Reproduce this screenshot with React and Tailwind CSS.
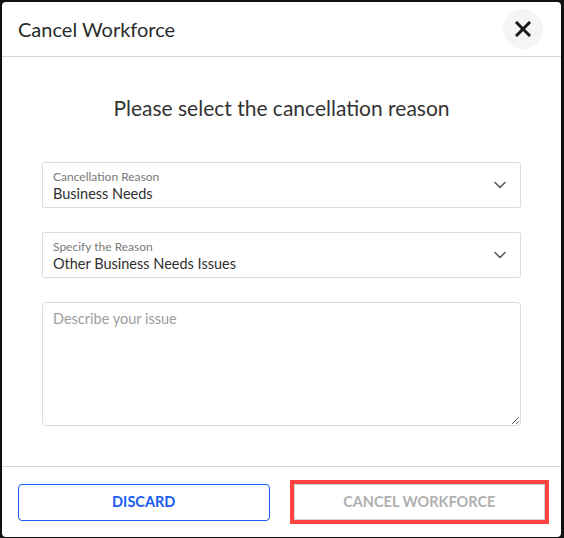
import React from 'react';
import { ChevronDown } from 'lucide-react';

const SelectBox = ({ label, value }) => (
    <div className="h-[46px] border border-[#dcdcdc] rounded-[2px] flex items-center justify-between pl-[10px] pr-[10px]">
        <div className="flex flex-col mt-[4px]">
            <span className="text-[12px] leading-[14px] text-[#7a7a7a]">{label}</span>
            <span className="text-[14.5px] leading-[20px] text-[#2f2f2f]">{value}</span>
        </div>
        <ChevronDown size={20} strokeWidth={1.8} className="text-[#555]" />
    </div>
);

const App = () => {
    return (
        <div className="w-[564px] h-[538px] bg-[#111] pt-[2px] pl-[2px] overflow-hidden" style={{ fontFamily: 'Lato, "Noto Sans", sans-serif' }}>
            <div className="w-[559px] h-[535px] bg-white rounded-[4px] flex flex-col">
                {/* Header */}
                <div className="h-[55px] border-b border-[#d6d6d6] flex items-center justify-between pl-4 pr-[18px]">
                    <h2 className="text-[20px] text-[#2b2b2b]">Cancel Workforce</h2>
                    <button className="w-10 h-10 rounded-full bg-[#f5f5f5] flex items-center justify-center">
                        <svg width="16" height="16" viewBox="0 0 16 16">
                            <path d="M2 2 L14 14 M14 2 L2 14" stroke="#1a1a1a" strokeWidth="3" strokeLinecap="square" />
                        </svg>
                    </button>
                </div>

                {/* Body */}
                <div className="flex-1 px-10 pt-[37px]">
                    <p className="text-center text-[21px] leading-[28px] text-[#333]">Please select the cancellation reason</p>
                    <div className="mt-[40px] flex flex-col gap-[24px]">
                        <SelectBox label="Cancellation Reason" value="Business Needs" />
                        <SelectBox label="Specify the Reason" value="Other Business Needs Issues" />
                        <textarea
                            placeholder="Describe your issue"
                            className="h-[124px] border border-[#dcdcdc] rounded-[4px] px-[10px] py-[5px] text-[14.5px] text-[#333] placeholder:text-[#9e9e9e] outline-none"
                        />
                    </div>
                </div>

                {/* Footer */}
                <div className="h-[71px] border-t border-[#d6d6d6] flex items-center gap-6 px-4">
                    <button className="flex-1 h-[37px] border border-[#1a5cf5] rounded-[4px] text-[14.5px] font-bold text-[#1a5cf5]">
                        DISCARD
                    </button>
                    <button className="flex-1 h-[36px] border border-[#d4d4d4] outline-4 outline-[#ff4343] text-[14.5px] font-bold text-[#b0b0b0]">
                        CANCEL WORKFORCE
                    </button>
                </div>
            </div>
        </div>
    );
};

export default App;
